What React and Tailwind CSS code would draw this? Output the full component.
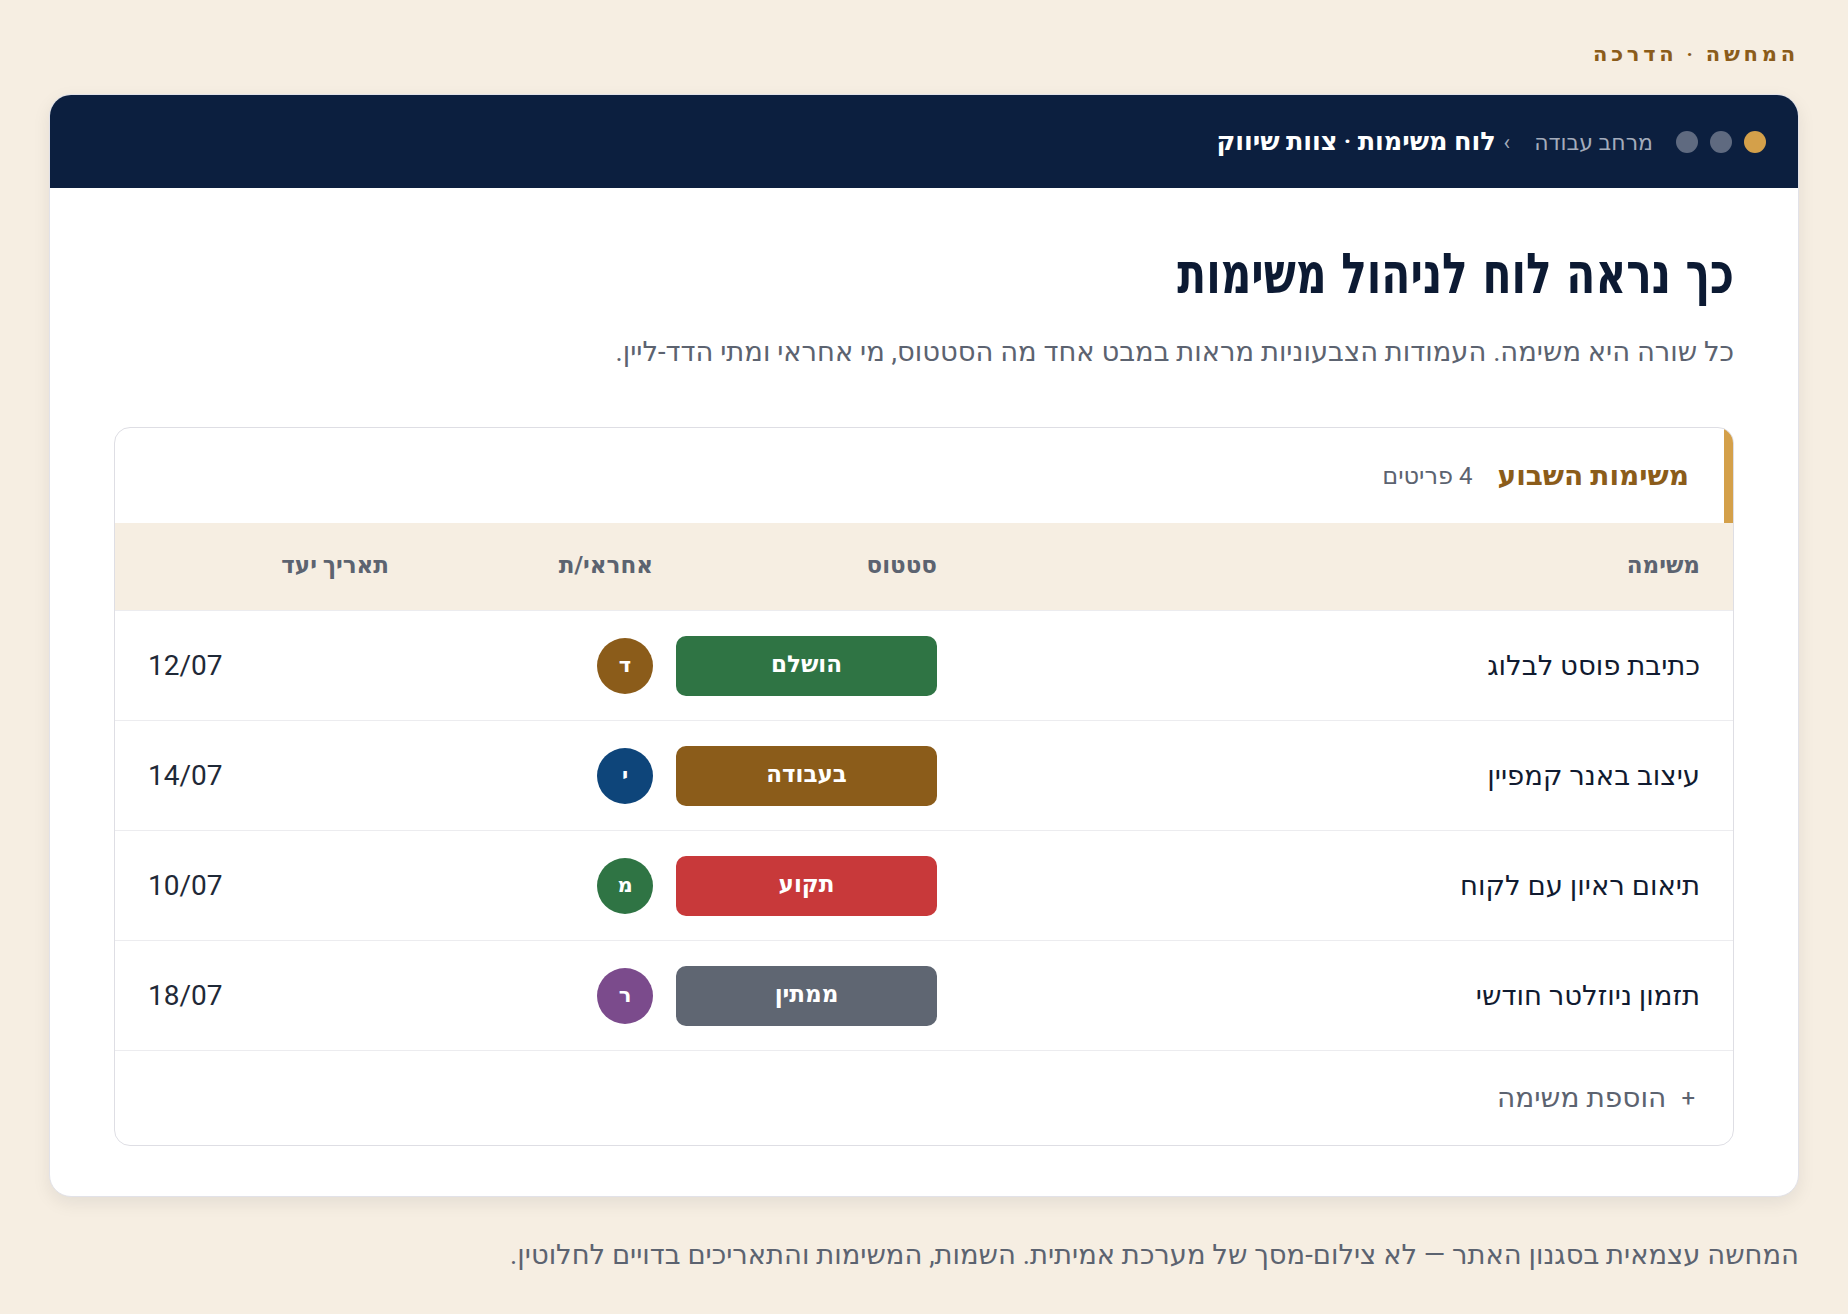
const tasks = [
    { id: 1, name: 'כתיבת פוסט לבלוג', status: 'הושלם', statusColor: 'bg-[#2f7444]', owner: 'ד', ownerColor: 'bg-[#8b5c1a]', due: '12/07' },
    { id: 2, name: 'עיצוב באנר קמפיין', status: 'בעבודה', statusColor: 'bg-[#8b5c1a]', owner: 'י', ownerColor: 'bg-[#0e457a]', due: '14/07' },
    { id: 3, name: 'תיאום ראיון עם לקוח', status: 'תקוע', statusColor: 'bg-[#c8393a]', owner: 'מ', ownerColor: 'bg-[#2f7444]', due: '10/07' },
    { id: 4, name: 'תזמון ניוזלטר חודשי', status: 'ממתין', statusColor: 'bg-[#5f6672]', owner: 'ר', ownerColor: 'bg-[#7b4b8c]', due: '18/07' },
];

// shared column template for the header and every row
const cols = 'grid grid-cols-[1fr_284px_264px_241px] items-center px-[33px]';

export default function App() {
    return (
        <div
            dir="rtl"
            className="min-h-screen bg-[#f6eee2] px-[49px] pt-[40px] pb-[40px] text-[#111b30]"
            style={{ fontFamily: 'Roboto, "Noto Sans", "DejaVu Sans", sans-serif' }}
        >
            <div className="mb-[26px] text-[21px] leading-[28px] font-bold tracking-[0.18em] text-[#8b5c1a]">
                המחשה · הדרכה
            </div>

            <div className="overflow-hidden rounded-[22px] border border-[#e2e2e8] bg-white shadow-[0_6px_18px_rgba(15,23,42,0.08)]">
                {/* window chrome */}
                <div className="flex h-[93px] items-center gap-[23px] bg-[#0c1f3f] px-[32px]">
                    <div className="flex gap-[12px]">
                        <span className="h-[22px] w-[22px] rounded-full bg-[#d4a04a]" />
                        <span className="h-[22px] w-[22px] rounded-full bg-[#5f6a80]" />
                        <span className="h-[22px] w-[22px] rounded-full bg-[#5f6a80]" />
                    </div>
                    <div className="flex items-baseline">
                        <span className="text-[22px] text-[#a3abbb]">מרחב עבודה</span>
                        <span className="pr-[24px] pl-[8px] text-[22px] text-[#a3abbb]">›</span>
                        <span className="text-[25.5px] font-semibold text-white">לוח משימות · צוות שיווק</span>
                    </div>
                </div>

                <div className="px-[64px] pt-[51px] pb-[50px]">
                    {/* tall, narrow display heading */}
                    <h1
                        className="origin-right scale-x-[0.84] text-[56px] leading-[70px] font-bold text-[#0c1a33]"
                        style={{ fontFamily: '"DejaVu Sans Condensed", "DejaVu Sans", sans-serif' }}
                    >
                        כך נראה לוח לניהול משימות
                    </h1>
                    <p className="mt-[23px] text-[27.4px] leading-[40px] text-[#5c6370]">
                        כל שורה היא משימה. העמודות הצבעוניות מראות במבט אחד מה הסטטוס, מי אחראי ומתי הדד-ליין.
                    </p>

                    <div className="mt-[55px] overflow-hidden rounded-[16px] border border-[#dedee4]">
                        <div className="flex h-[95px] items-center gap-[25px] border-r-[9px] border-[#d4a04a] pr-[35px]">
                            <span className="text-[28px] font-bold text-[#8b5c1a]">משימות השבוע</span>
                            <span className="text-[24px] text-[#5c6370]">4 פריטים</span>
                        </div>

                        <div className={`${cols} h-[87px] bg-[#f6eee2] text-[23px] font-bold text-[#5c6370]`}>
                            <div>משימה</div>
                            <div>סטטוס</div>
                            <div>אחראי/ת</div>
                            <div>תאריך יעד</div>
                        </div>

                        {tasks.map(task => (
                            <div key={task.id} className={`${cols} h-[110px] border-t border-[#ececef]`}>
                                <div className="text-[27.5px] text-[#111b30]">{task.name}</div>
                                <div>
                                    <div className={`flex h-[60px] w-[261px] items-center justify-center rounded-[10px] text-[23px] font-bold text-white ${task.statusColor}`}>
                                        {task.status}
                                    </div>
                                </div>
                                <div>
                                    <div className={`flex h-[56px] w-[56px] items-center justify-center rounded-full text-[21px] font-bold text-white ${task.ownerColor}`}>
                                        {task.owner}
                                    </div>
                                </div>
                                <div dir="ltr" className="text-[28px] text-[#1f2937]">{task.due}</div>
                            </div>
                        ))}

                        <div className="flex h-[95px] items-center gap-[15px] border-t border-[#ececef] pr-[38px] text-[28px] text-[#5c6370]">
                            <span className="text-[24px]">+</span>
                            <span>הוספת משימה</span>
                        </div>
                    </div>
                </div>
            </div>

            <p className="mt-[38px] text-[27.4px] text-[#5c6370]">
                המחשה עצמאית בסגנון האתר — לא צילום-מסך של מערכת אמיתית. השמות, המשימות והתאריכים בדויים לחלוטין.
            </p>
        </div>
    );
}
